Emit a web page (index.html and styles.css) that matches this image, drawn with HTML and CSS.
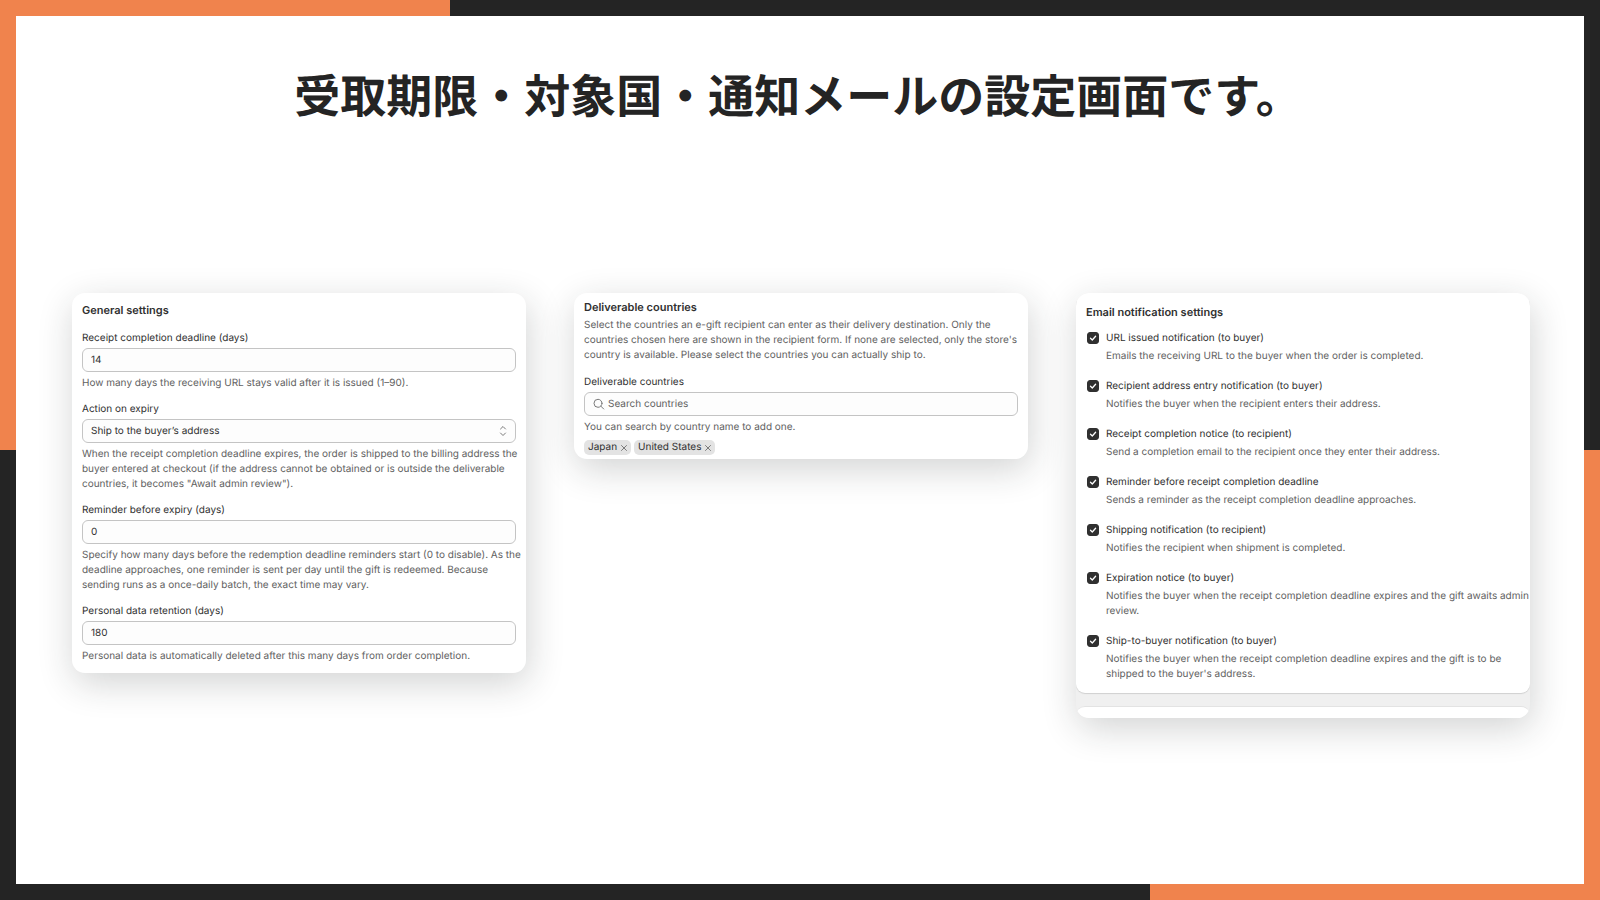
FILE: index.html
```html
<!DOCTYPE html>
<html lang="ja">
<head>
<meta charset="utf-8">
<meta name="viewport" content="width=device-width, initial-scale=1">
<title>設定画面</title>
<link rel="stylesheet" href="styles.css">
</head>
<body>
<div class="slide">
<h1 class="slide-title">受取期限・対象国・通知メールの設定画面です。</h1>
<main class="cards" lang="en">

<section class="card general">
<h2 class="card-title">General settings</h2>
<div class="fields">
<div class="field">
<label class="field-label" for="deadline">Receipt completion deadline (days)</label>
<div class="control"><input class="control-input" id="deadline" type="text" inputmode="numeric" value="14"></div>
<p class="help">How many days the receiving URL stays valid after it is issued (1–90).</p>
</div>
<div class="field">
<label class="field-label" for="expiry">Action on expiry</label>
<div class="control"><select class="control-input" id="expiry"><option>Ship to the buyer’s address</option><option>Await admin review</option></select>
<svg class="select-icon" viewBox="0 0 8 12" aria-hidden="true"><path d="M1.5 4 4 1.5 6.500 4M1.500 8 4 10.500 6.500 8"/></svg></div>
<p class="help">When the receipt completion deadline expires, the order is shipped to the billing address the buyer entered at checkout (if the address cannot be obtained or is outside the deliverable countries, it becomes "Await admin review").</p>
</div>
<div class="field">
<label class="field-label" for="reminder">Reminder before expiry (days)</label>
<div class="control"><input class="control-input" id="reminder" type="text" inputmode="numeric" value="0"></div>
<p class="help">Specify how many days before the redemption deadline reminders start (0 to disable). As the deadline approaches, one reminder is sent per day until the gift is redeemed. Because sending runs as a once-daily batch, the exact time may vary.</p>
</div>
<div class="field">
<label class="field-label" for="retention">Personal data retention (days)</label>
<div class="control"><input class="control-input" id="retention" type="text" inputmode="numeric" value="180"></div>
<p class="help">Personal data is automatically deleted after this many days from order completion.</p>
</div>
</div>
</section>

<section class="card countries">
<h2 class="card-title">Deliverable countries</h2>
<p class="intro">Select the countries an e-gift recipient can enter as their delivery destination. Only the countries chosen here are shown in the recipient form. If none are selected, only the store's country is available. Please select the countries you can actually ship to.</p>
<div class="field">
<label class="field-label" for="country">Deliverable countries</label>
<div class="control"><svg class="search-icon" viewBox="0 0 12 12" aria-hidden="true"><circle cx="5" cy="5.300" r="4"/><path d="m8 8.300 2.700 2.700"/></svg><input class="control-input" id="country" type="search" placeholder="Search countries"></div>
<p class="help">You can search by country name to add one.</p>
</div>
<ul class="tags">
<li class="tag">Japan<button class="tag-remove" type="button" aria-label="Remove Japan"><svg viewBox="0 0 6 6" aria-hidden="true"><path d="m.5.5 5 5m0-5-5 5"/></svg></button></li>
<li class="tag">United States<button class="tag-remove" type="button" aria-label="Remove United States"><svg viewBox="0 0 6 6" aria-hidden="true"><path d="m.5.5 5 5m0-5-5 5"/></svg></button></li>
</ul>
</section>

<section class="card emails">
<div class="panel">
<h2 class="card-title">Email notification settings</h2>
<ul class="checks">
<li class="check"><span class="tick"><input class="tick-box" id="n1" type="checkbox" checked><svg class="tick-mark" viewBox="0 0 12 12" aria-hidden="true"><path d="m3.500 6.300 1.800 1.700 3.300-3.800"/></svg></span><label class="check-label" for="n1">URL issued notification (to buyer)</label><p class="check-help">Emails the receiving URL to the buyer when the order is completed.</p></li>
<li class="check"><span class="tick"><input class="tick-box" id="n2" type="checkbox" checked><svg class="tick-mark" viewBox="0 0 12 12" aria-hidden="true"><path d="m3.500 6.300 1.800 1.700 3.300-3.800"/></svg></span><label class="check-label" for="n2">Recipient address entry notification (to buyer)</label><p class="check-help">Notifies the buyer when the recipient enters their address.</p></li>
<li class="check"><span class="tick"><input class="tick-box" id="n3" type="checkbox" checked><svg class="tick-mark" viewBox="0 0 12 12" aria-hidden="true"><path d="m3.500 6.300 1.800 1.700 3.300-3.800"/></svg></span><label class="check-label" for="n3">Receipt completion notice (to recipient)</label><p class="check-help">Send a completion email to the recipient once they enter their address.</p></li>
<li class="check"><span class="tick"><input class="tick-box" id="n4" type="checkbox" checked><svg class="tick-mark" viewBox="0 0 12 12" aria-hidden="true"><path d="m3.500 6.300 1.800 1.700 3.300-3.800"/></svg></span><label class="check-label" for="n4">Reminder before receipt completion deadline</label><p class="check-help">Sends a reminder as the receipt completion deadline approaches.</p></li>
<li class="check"><span class="tick"><input class="tick-box" id="n5" type="checkbox" checked><svg class="tick-mark" viewBox="0 0 12 12" aria-hidden="true"><path d="m3.500 6.300 1.800 1.700 3.300-3.800"/></svg></span><label class="check-label" for="n5">Shipping notification (to recipient)</label><p class="check-help">Notifies the recipient when shipment is completed.</p></li>
<li class="check"><span class="tick"><input class="tick-box" id="n6" type="checkbox" checked><svg class="tick-mark" viewBox="0 0 12 12" aria-hidden="true"><path d="m3.500 6.300 1.800 1.700 3.300-3.800"/></svg></span><label class="check-label" for="n6">Expiration notice (to buyer)</label><p class="check-help">Notifies the buyer when the receipt completion deadline expires and the gift awaits admin review.</p></li>
<li class="check"><span class="tick"><input class="tick-box" id="n7" type="checkbox" checked><svg class="tick-mark" viewBox="0 0 12 12" aria-hidden="true"><path d="m3.500 6.300 1.800 1.700 3.300-3.800"/></svg></span><label class="check-label" for="n7">Ship-to-buyer notification (to buyer)</label><p class="check-help">Notifies the buyer when the receipt completion deadline expires and the gift is to be shipped to the buyer's address.</p></li>
</ul>
</div>
<div class="next-panel"></div>
</section>

</main>
</div>
</body>
</html>
```

FILE: styles.css
```css
*, *::before, *::after { box-sizing: border-box; }

body {
  margin: 0;
  min-height: 100vh;
  display: flex;
  padding: 16px;
  background:
    linear-gradient(#f0834d, #f0834d) left top / 450px 16px no-repeat,
    linear-gradient(#f0834d, #f0834d) left top / 16px 450px no-repeat,
    linear-gradient(#f0834d, #f0834d) right bottom / 450px 16px no-repeat,
    linear-gradient(#f0834d, #f0834d) right bottom / 16px 450px no-repeat,
    #242424;
  color: #303030;
  font: 10px/15px Inter, "Noto Sans CJK JP", sans-serif;
  text-rendering: geometricPrecision;
}

h1, h2, p, ul { margin: 0; padding: 0; }
ul { list-style: none; }

.slide {
  flex: 1;
  min-width: 0;
  padding: 44px 54px 56px 56px;
  background: #fff;
}

.slide-title {
  padding-right: 6px;
  color: #242424;
  font: 700 46px/68px "Noto Sans CJK JP", sans-serif;
  text-align: center;
}

.cards {
  display: grid;
  grid-template-columns: repeat(3, minmax(0, 1fr));
  gap: 48px;
  align-items: start;
  margin-top: 165px;
}

.card {
  overflow: hidden;
  border-radius: 13px;
  background: #fff;
  box-shadow: 2px 10px 36px rgba(28, 34, 36, 0.2);
}

.general { padding: 9px 10px; }
.countries { padding: 6px 10px 4px; }
.emails { background: #f0f0f0; }

.card-title {
  font-size: 11px;
  line-height: 16px;
  font-weight: 600;
}

.fields {
  display: flex;
  flex-direction: column;
  gap: 11px;
  margin-top: 13px;
}

.field { display: flex; flex-direction: column; }

.control {
  display: flex;
  align-items: center;
  height: 24px;
  margin-top: 2px;
  padding: 0 8px;
  border: 1px solid #c4c4c4;
  border-radius: 6px;
  background: #fdfdfd;
}

.control-input {
  flex: 1;
  min-width: 0;
  height: 22px;
  margin: 0;
  padding: 0;
  border: 0;
  outline: 0;
  appearance: none;
  background: transparent;
  color: #303030;
  font: inherit;
  text-rendering: inherit;
}

.control-input::placeholder { color: #616161; opacity: 1; }

.help { margin: 4px -8px 0 0; color: #616161; }

.intro { margin: 3px 0 12px; color: #616161; }

svg {
  fill: none;
  stroke: #7a7a7a;
  stroke-linecap: round;
  stroke-linejoin: round;
}

.select-icon { width: 8px; height: 12px; }

.search-icon { width: 12px; height: 12px; margin-right: 3px; }

.tags { display: flex; gap: 3px; margin-top: 5px; }

.tag {
  display: flex;
  align-items: center;
  gap: 4px;
  padding: 0 4px;
  border-radius: 5px;
  background: #e3e3e3;
}

.tag-remove {
  display: flex;
  padding: 0;
  border: 0;
  background: none;
}

.tag-remove svg { width: 6px; height: 6px; }

.panel {
  padding: 11px 10px;
  border-radius: 0 0 9px 9px;
  background: #fff;
  box-shadow: 0 1px 1px #d0d0d0;
}

.checks {
  display: flex;
  flex-direction: column;
  gap: 15px;
  margin-top: 11px;
}

.check {
  display: grid;
  grid-template-columns: 14px minmax(0, 1fr);
  column-gap: 6px;
  row-gap: 3px;
  align-items: start;
}

.tick { display: grid; justify-content: center; padding-top: 1px; }

.tick-box, .tick-mark { grid-area: 1 / 1; width: 12px; height: 12px; }

.tick-box {
  margin: 0;
  appearance: none;
  border: 1px solid #8a8a8a;
  border-radius: 3px;
}

.tick-box:checked { border-color: #303030; background: #303030; }

.tick-mark { stroke: #fff; stroke-width: 1.3; pointer-events: none; }

.check-help { grid-column: 2; margin-right: -10px; color: #616161; }

.next-panel {
  height: 12px;
  margin-top: 13px;
  border-top: 1px solid #e3e3e3;
  border-radius: 9px 9px 0 0;
  background: #fff;
}

@media (max-width: 1000px) {
  .cards { grid-template-columns: minmax(0, 1fr); margin-top: 60px; }
}
```
